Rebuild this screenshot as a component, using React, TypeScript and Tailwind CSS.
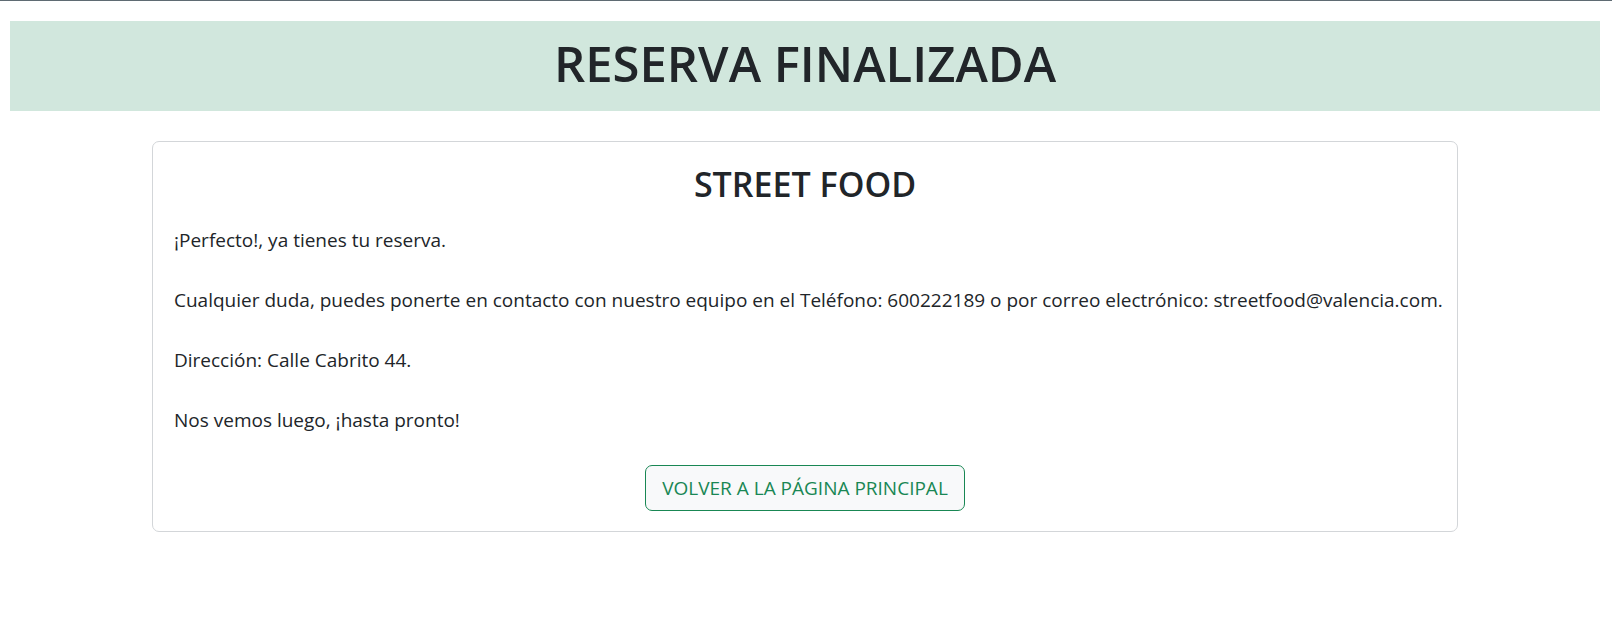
import React from 'react';

const paragraphs = [
  '¡Perfecto!, ya tienes tu reserva.',
  'Cualquier duda, puedes ponerte en contacto con nuestro equipo en el Teléfono: 600222189 o por correo electrónico: streetfood@valencia.com.',
  'Dirección: Calle Cabrito 44.',
  'Nos vemos luego, ¡hasta pronto!',
];

const App = () => {
  return (
    <div
      className="min-h-[618px] bg-white text-[#212529]"
      style={{ fontFamily: '"Open Sans", "Noto Sans", sans-serif' }}
    >
      <div className="h-px bg-[#5f6b73]" />

      <header className="mt-[20px] ml-[10px] w-[1590px] h-[90px] pb-[6px] bg-[#d1e7dd] flex items-center justify-center">
        <h1 className="text-[49px] font-semibold leading-[1.2]">
          RESERVA FINALIZADA
        </h1>
      </header>

      <main className="mt-[30px] ml-[152px] w-[1306px] border border-[#d3d6d9] rounded-[7px] px-[21px] pt-[22px] pb-[20px]">
        <h2 className="text-center text-[34px] font-semibold leading-[1.2] mb-[20px]">
          STREET FOOD
        </h2>

        {paragraphs.map((text, i) => (
          <p key={i} className="text-[19px] leading-[30px] mb-[30px] whitespace-nowrap">
            {text}
          </p>
        ))}

        <div className="flex justify-center">
          <button className="px-[16px] py-[8px] text-[19px] leading-[28px] text-[#198754] bg-[#f8f9fa] border border-[#198754] rounded-[7px]">
            VOLVER A LA PÁGINA PRINCIPAL
          </button>
        </div>
      </main>
    </div>
  );
};

export default App;
